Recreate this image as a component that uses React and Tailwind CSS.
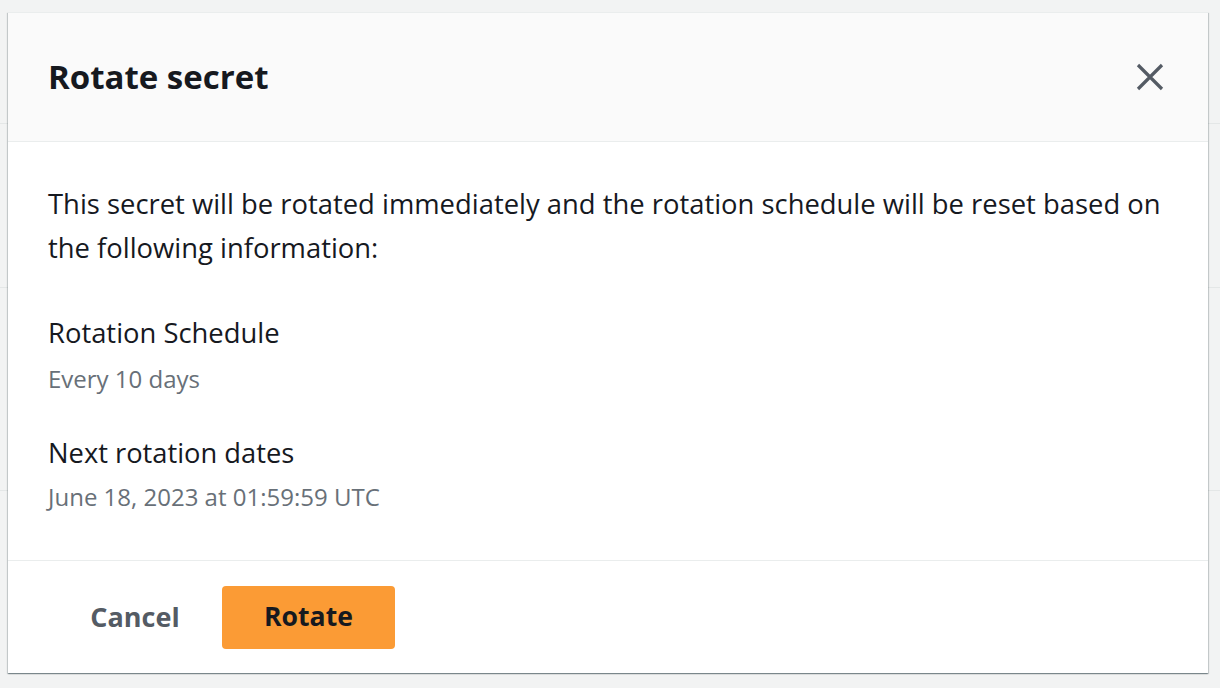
export default function App() {
  const font = { fontFamily: '"Open Sans", "Noto Sans", Arial, sans-serif' };
  return (
    <div className="relative w-[1220px] h-[688px] bg-[#f2f3f3] overflow-hidden pl-[8px] pt-[12px]" style={font}>
      {/* faint background page lines */}
      <div className="absolute left-0 right-0 top-[123px] h-px bg-[#e4e7e7]" />
      <div className="absolute left-0 right-0 top-[287px] h-px bg-[#e4e7e7]" />
      <div className="absolute left-0 right-0 top-[490px] h-px bg-[#e4e7e7]" />
      <div className="relative w-[1200px] h-[661px] bg-white flex flex-col border-t border-[#eaeded] shadow-[0_1px_1px_0_rgba(0,28,36,0.3),1px_1px_1px_0_rgba(0,28,36,0.15),-1px_1px_1px_0_rgba(0,28,36,0.15)]">
        <div className="h-[129px] shrink-0 bg-[#fafafa] border-b border-[#eaeded] flex items-center justify-between pl-[40px] pr-[44px]">
          <h2 className="text-[33px] leading-[44px] font-bold text-[#16191f]">Rotate secret</h2>
          <svg width="28" height="28" viewBox="0 0 28 28" className="text-[#545b64]">
            <path d="M2 2 L26 26 M26 2 L2 26" stroke="currentColor" strokeWidth="3.2" fill="none" />
          </svg>
        </div>
        <div className="flex-1 pl-[40px] pr-[40px] pt-[40px] text-[#16191f]">
          <p className="text-[27.4px] leading-[44px]">
            This secret will be rotated immediately and the rotation schedule will be reset based on the following information:
          </p>
          <div className="mt-[41px] text-[27.4px] leading-[44px]">Rotation Schedule</div>
          <div className="mt-[6px] text-[24px] leading-[36px] text-[#687078]">Every 10 days</div>
          <div className="mt-[34px] text-[27.3px] leading-[44px]">Next rotation dates</div>
          <div className="mt-[4px] text-[24px] leading-[36px] text-[#687078]">June 18, 2023 at 01:59:59 UTC</div>
        </div>
        <div className="h-[113px] shrink-0 border-t border-[#eaeded] flex items-center pl-[40px]">
          <button className="w-[174px] h-[63px] text-[27px] font-bold text-[#545b64] flex items-center justify-center">Cancel</button>
          <button className="w-[173px] h-[63px] rounded-[4px] bg-[#fb9b35] text-[26.6px] font-bold text-[#16191f] flex items-center justify-center">Rotate</button>
        </div>
      </div>
    </div>
  );
}
